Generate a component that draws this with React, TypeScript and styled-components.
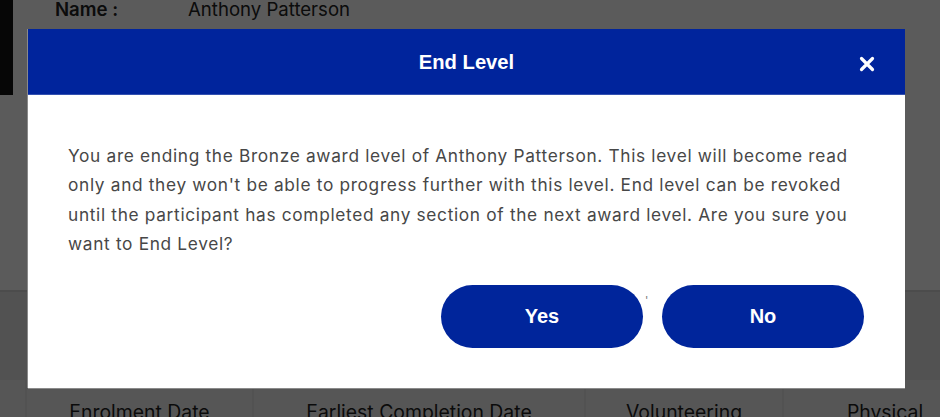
import React from "react";
import styled, { createGlobalStyle } from "styled-components";

const Global = createGlobalStyle`
  html, body { margin: 0; padding: 0; }
  body { width: 940px; height: 417px; overflow: hidden; background: #fff; font-family: "Inter", "Liberation Sans", sans-serif; }
`;

const Page = styled.div`
  position: relative;
  width: 940px;
  height: 417px;
  overflow: hidden;
  background: #e6e6e6;
`;

const TopSection = styled.div`
  height: 290px;
  background: #fbfbfb;
  border-bottom: 2px solid #d2d2d2;
  display: flex;
  align-items: flex-start;
`;

const SideBar = styled.div`
  width: 13px;
  height: 95px;
  background: #111;
  flex: none;
`;

const NameRow = styled.div`
  display: flex;
  padding: 0 0 0 42px;
  font-size: 18.6px;
  line-height: 19px;
  color: #222;
`;

const NameLabel = styled.span`
  width: 133px;
  font-weight: 600;
`;

const NameValue = styled.span`
  font-weight: 400;
`;

const Middle = styled.div`
  height: 88px;
  background: #e4e4e4;
`;

const TableHead = styled.div`
  display: grid;
  grid-template-columns: 25px 227px 332px 198px 204px;
  height: 40px;
  background: #ececec;
`;

const HeadCell = styled.div<{ $first?: boolean }>`
  border-left: ${(p) => (p.$first ? "none" : "2px solid #e2e2e2")};
  background: #efefef;
  font-size: 19.4px;
  color: #1f1f1f;
  text-align: center;
  padding-top: 20px;
  white-space: nowrap;
`;

const Overlay = styled.div`
  position: absolute;
  inset: 0;
  background: rgba(0, 0, 0, 0.64);
  padding: 29px 0 0 28px;
  box-sizing: border-box;
`;

const Modal = styled.div`
  width: 877px;
  height: 359px;
  background: #fff;
  box-shadow: -1px 0 0 #8a8a8a, 0 1px 0 #8a8a8a;
  display: flex;
  flex-direction: column;
`;

const Header = styled.div`
  height: 66px;
  background: #00249c;
  display: flex;
  align-items: center;
  justify-content: center;
  position: relative;
  border-bottom: 1px solid #3350b0;
  box-sizing: border-box;
`;

const Title = styled.h2`
  margin: 0;
  font-family: "Liberation Sans", Arial, sans-serif;
  font-weight: 700;
  font-size: 20.2px;
  color: #fff;
  padding-top: 1px;
`;

const Close = styled.button`
  position: absolute;
  right: 29px;
  top: 26px;
  width: 18px;
  height: 18px;
  padding: 0;
  border: none;
  background: transparent;
  display: flex;
  align-items: center;
  justify-content: center;
  cursor: pointer;
`;

const Body = styled.div`
  padding: 45px 40px 40px 40px;
  display: flex;
  flex-direction: column;
`;

const Message = styled.p`
  margin: 0;
  width: 800px;
  font-family: "Inter", sans-serif;
  font-size: 17.3px;
  letter-spacing: 0.67px;
  line-height: 29.4px;
  color: #474747;
  transform: translateY(1px);
`;

const Actions = styled.div`
  display: flex;
  justify-content: flex-end;
  align-items: flex-start;
  margin-top: 27px;
  padding-right: 1px;
`;

const Tick = styled.span`
  width: 19px;
  font-size: 11px;
  color: #777;
  text-align: left;
  padding-left: 2px;
  line-height: 30px;
  box-sizing: border-box;
`;

const Btn = styled.button`
  width: 202px;
  height: 63px;
  border-radius: 32px;
  border: none;
  background: #00259b;
  color: #fff;
  font-family: "Liberation Sans", Arial, sans-serif;
  font-weight: 700;
  font-size: 20px;
  cursor: pointer;
`;

export default function App() {
  return (
    <>
      <Global />
      <Page>
        <TopSection>
          <SideBar />
          <NameRow>
            <NameLabel>Name :</NameLabel>
            <NameValue>Anthony Patterson</NameValue>
          </NameRow>
        </TopSection>
        <Middle />
        <TableHead>
          <HeadCell $first />
          <HeadCell>Enrolment Date</HeadCell>
          <HeadCell>Earliest Completion Date</HeadCell>
          <HeadCell>Volunteering</HeadCell>
          <HeadCell>Physical</HeadCell>
        </TableHead>
        <Overlay>
          <Modal>
            <Header>
              <Title>End Level</Title>
              <Close aria-label="Close">
                <svg width="16" height="16" viewBox="0 0 16 16">
                  <path d="M2.5 2.5 L13.5 13.5 M13.5 2.5 L2.5 13.5" stroke="#fff" strokeWidth="3.2" strokeLinecap="round" />
                </svg>
              </Close>
            </Header>
            <Body>
              <Message>
                You are ending the Bronze award level of Anthony Patterson. This level will become read
                only and they won't be able to progress further with this level. End level can be revoked
                until the participant has completed any section of the next award level. Are you sure you
                want to End Level?
              </Message>
              <Actions>
                <Btn>Yes</Btn>
                <Tick>'</Tick>
                <Btn>No</Btn>
              </Actions>
            </Body>
          </Modal>
        </Overlay>
      </Page>
    </>
  );
}
